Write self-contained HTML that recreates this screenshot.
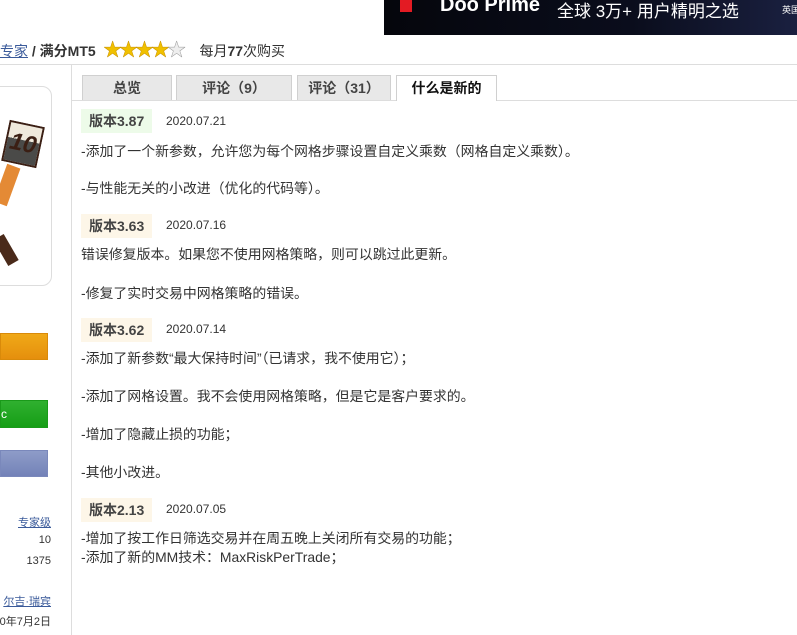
<!DOCTYPE html>
<html><head><meta charset="utf-8"><style>
body{margin:0;width:797px;height:635px;overflow:hidden;background:#fff;font-family:"Liberation Sans","Noto Sans CJK SC",sans-serif;color:#333;position:relative}
.a{position:absolute;white-space:nowrap}
.banner{left:384px;top:0;width:413px;height:35px;background:linear-gradient(90deg,#05060c,#0a0d1c 60%,#1a2040);overflow:hidden}
.tab{position:absolute;top:75px;height:25px;background:#e8e8e8;border:1px solid #d0d0d0;border-bottom:none;box-sizing:border-box;text-align:center;font-size:14px;font-weight:bold;line-height:25px;color:#444}
.badge{position:absolute;left:81px;height:24px;line-height:24px;padding:0 8px;font-size:14px;font-weight:bold;color:#444;background:#fdf6e8}
.date{position:absolute;left:166px;font-size:12px;color:#333}
.t{position:absolute;left:81px;font-size:13.9px;color:#333;white-space:nowrap}
.r{position:absolute;right:746px;font-size:11px;color:#333;white-space:nowrap}
</style></head><body>
<div class="a banner">
 <div class="a" style="left:16px;top:0;width:12px;height:12px;background:#e31b23"></div>
 <div class="a" style="left:56px;top:-6px;color:#fff;font-weight:bold;font-size:20px">Doo Prime</div>
 <div class="a" style="left:173px;top:-3px;color:#fff;font-size:17px">全球 3万+ 用户精明之选</div>
 <div class="a" style="left:398px;top:3px;color:#fff;font-size:9px">英国</div>
</div>
<div class="a" style="left:0;top:36px;font-size:14px;font-weight:bold;color:#333"><span style="color:#3a5a9a;text-decoration:underline;font-weight:normal">专家</span> / 满分MT5 <span style="color:#f0c000;font-size:18px;letter-spacing:-2px;-webkit-text-stroke:0.5px #c89000;margin-left:4px">★★★★<span style="color:#eee;-webkit-text-stroke:0.5px #999">★</span></span> <span style="font-weight:normal;margin-left:12px">每月<b>77</b>次购买</span></div>
<div class="a" style="left:0;top:64px;width:797px;height:1px;background:#ddd"></div>
<div class="a" style="left:71px;top:65px;width:1px;height:570px;background:#ddd"></div>
<div class="a" style="left:-10px;top:86px;width:62px;height:200px;border:1px solid #ddd;border-radius:10px;box-sizing:border-box"></div>
<div class="a" style="left:5px;top:123px;width:32px;height:38px;background:linear-gradient(#efe9dc 40%,#4a4a48 40%);border:2px solid #3b1f14;outline:2px solid #fff;transform:rotate(12deg);color:#3b1f14;font-weight:bold;font-size:24px;font-style:italic;text-align:center;line-height:38px">10</div>
<div class="a" style="left:0;top:165px;width:14px;height:40px;background:#e48a35;transform:rotate(20deg)"></div>
<div class="a" style="left:0;top:235px;width:12px;height:30px;background:#4a2a1a;transform:rotate(-30deg)"></div>
<div class="a" style="left:0;top:333px;width:48px;height:27px;background:linear-gradient(#f0a918,#e58f0d);border:1px solid #d98a0a;box-sizing:border-box"></div>
<div class="a" style="left:0;top:400px;width:48px;height:28px;background:linear-gradient(#30b030,#169e16);border:1px solid #1a9a1a;box-sizing:border-box;color:#fff;font-size:12px;line-height:26px">с</div>
<div class="a" style="left:0;top:450px;width:48px;height:27px;background:linear-gradient(#8e9cc8,#7382b8);border:1px solid #7a88bb;box-sizing:border-box"></div>
<div class="r" style="top:514px;color:#3a5a9a;text-decoration:underline">专家级</div>
<div class="r" style="top:534px">10</div>
<div class="r" style="top:555px">1375</div>
<div class="r" style="top:593px;color:#3a5a9a;text-decoration:underline">尔吉·瑞宾</div>
<div class="r" style="top:613px">0年7月2日</div>
<div class="a" style="left:72px;top:100px;width:725px;height:1px;background:#ddd"></div>
<div class="tab" style="left:82px;width:90px">总览</div>
<div class="tab" style="left:176px;width:116px">评论（9）</div>
<div class="tab" style="left:297px;width:94px">评论（31）</div>
<div class="tab" style="left:396px;width:101px;height:26px;background:#fff;color:#111">什么是新的</div>
<div class="badge" style="top:109px;background:#edfbe9">版本3.87</div><div class="date" style="top:114px">2020.07.21</div>
<div class="t" style="top:141px">-添加了一个新参数，允许您为每个网格步骤设置自定义乘数（网格自定义乘数）。</div>
<div class="t" style="top:178px">-与性能无关的小改进（优化的代码等）。</div>
<div class="badge" style="top:214px">版本3.63</div><div class="date" style="top:218px">2020.07.16</div>
<div class="t" style="top:244px">错误修复版本。如果您不使用网格策略，则可以跳过此更新。</div>
<div class="t" style="top:283px">-修复了实时交易中网格策略的错误。</div>
<div class="badge" style="top:318px">版本3.62</div><div class="date" style="top:322px">2020.07.14</div>
<div class="t" style="top:348px">-添加了新参数“最大保持时间”（已请求，我不使用它）；</div>
<div class="t" style="top:386px">-添加了网格设置。我不会使用网格策略，但是它是客户要求的。</div>
<div class="t" style="top:424px">-增加了隐藏止损的功能；</div>
<div class="t" style="top:462px">-其他小改进。</div>
<div class="badge" style="top:498px">版本2.13</div><div class="date" style="top:502px">2020.07.05</div>
<div class="t" style="top:528px">-增加了按工作日筛选交易并在周五晚上关闭所有交易的功能；</div>
<div class="t" style="top:547px">-添加了新的MM技术：MaxRiskPerTrade；</div>
</body></html>
